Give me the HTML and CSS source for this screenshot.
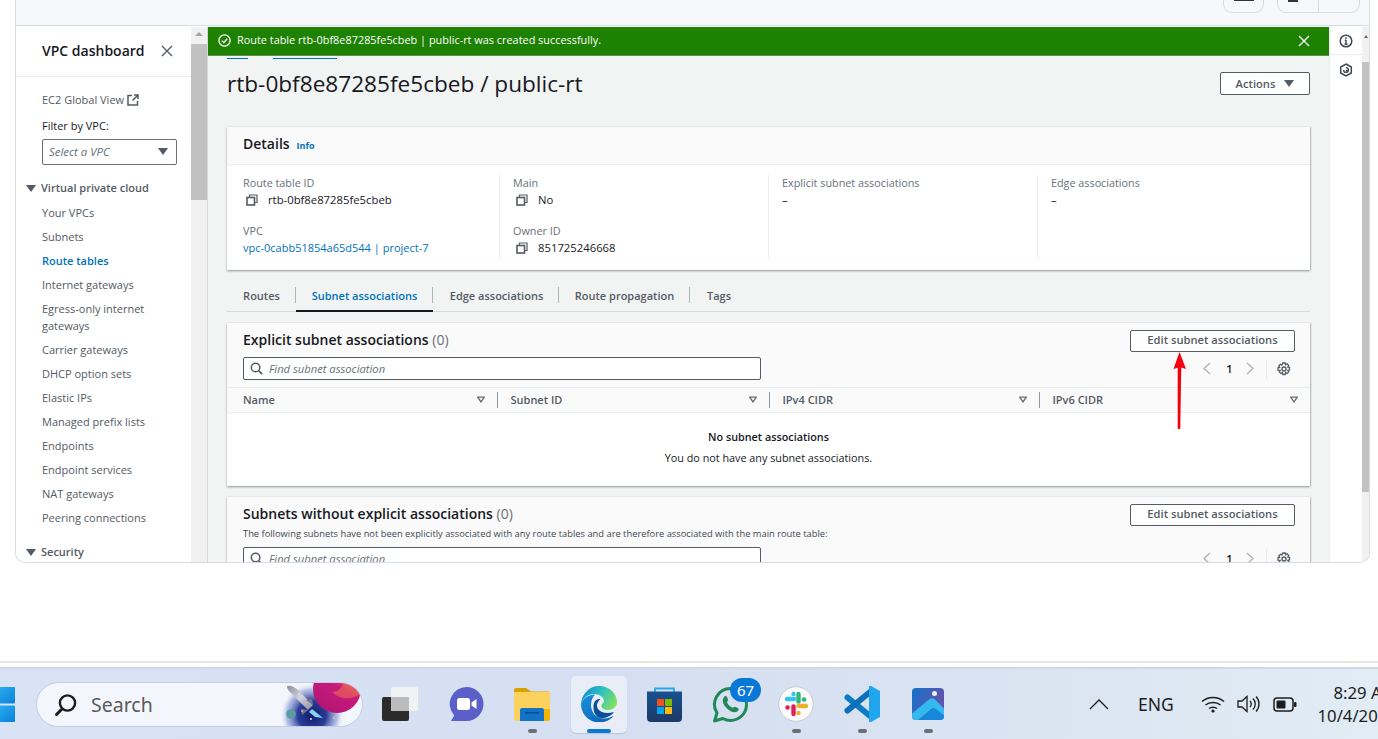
FILE: index.html
```html
<!DOCTYPE html>
<html lang="en">
<head>
  <meta charset="UTF-8">
  <title>Route table details</title>
  <link rel="stylesheet" href="styles.css">
</head>
<body>
  <svg class="defs" width="0" height="0">
    <symbol id="copy" viewBox="0 0 12 12"><path d="M3.5 3.5V1h7.5v7.5H8.5" fill="none" stroke="#545b64" stroke-width="1.2"/><rect x="1" y="3.5" width="7.5" height="7.5" fill="none" stroke="#545b64" stroke-width="1.6"/></symbol>
    <symbol id="sort" viewBox="0 0 10 8"><path d="M1 1h8L5 7z" fill="none" stroke="#687078" stroke-width="1.7"/></symbol>
    <symbol id="search" viewBox="0 0 14 14"><circle cx="6" cy="6" r="4.6" fill="none" stroke="#545b64" stroke-width="1.6"/><path d="M9.5 9.5L13 13" stroke="#545b64" stroke-width="1.8"/></symbol>
    <symbol id="gear" viewBox="0 0 14 14"><circle cx="7" cy="7" r="2" fill="none" stroke="#545b64" stroke-width="1.4"/><path d="M5.8 1h2.4l.4 1.7 1.5-.8 1.6 1.6-.9 1.5 1.7.5v2.4l-1.7.5.9 1.5-1.6 1.6-1.5-.9-.4 1.9H5.8l-.4-1.9-1.5.9-1.6-1.6.9-1.5L1 8.2V5.8l1.7-.5-.9-1.5 1.6-1.6 1.5.8z" fill="none" stroke="#545b64" stroke-width="1.3"/></symbol>
  </svg>

  <div class="window">
    <!-- Console header, mostly cut off -->
    <div class="topbar">
      <div class="top-btn top-btn-one"><span class="top-mark"></span></div>
      <div class="top-btn top-btn-two"><span class="top-flag"></span></div>
    </div>

    <div class="console">
      <aside class="sidebar">
        <div class="side-head">
          <span>VPC dashboard</span>
          <svg width="12" height="12" viewBox="0 0 12 12"><path d="M1 1l10 10M11 1L1 11" stroke="#545b64" stroke-width="1.4"/></svg>
        </div>
        <div class="side-link">EC2 Global View
          <svg width="12" height="12" viewBox="0 0 12 12"><path d="M5 1.5H1v9.5h9.5V7M7 1h4v4M11 1L5.5 6.5" fill="none" stroke="#545b64" stroke-width="1.5"/></svg>
        </div>
        <div class="side-label">Filter by VPC:</div>
        <div class="side-select"><i>Select a VPC</i><span class="caret"></span></div>
        <div class="side-group"><span class="caret"></span>Virtual private cloud</div>
        <ul class="side-list">
          <li>Your VPCs</li>
          <li>Subnets</li>
          <li class="current">Route tables</li>
          <li>Internet gateways</li>
          <li class="two-line">Egress-only internet gateways</li>
          <li>Carrier gateways</li>
          <li>DHCP option sets</li>
          <li>Elastic IPs</li>
          <li>Managed prefix lists</li>
          <li>Endpoints</li>
          <li>Endpoint services</li>
          <li>NAT gateways</li>
          <li>Peering connections</li>
        </ul>
        <div class="side-group side-security"><span class="caret"></span>Security</div>
      </aside>
      <div class="scroll scroll-left"><span class="scroll-up"></span><span class="thumb thumb-left"></span></div>

      <main class="main">
        <div class="flash">
          <svg width="13" height="13" viewBox="0 0 13 13"><circle cx="6.5" cy="6.5" r="5.6" fill="none" stroke="#fff" stroke-width="1.3"/><path d="M3.8 6.6l2 2 3.4-3.8" fill="none" stroke="#fff" stroke-width="1.3"/></svg>
          <span class="flash-text">Route table rtb-0bf8e87285fe5cbeb | public-rt was created successfully.</span>
          <svg class="flash-close" width="12" height="12" viewBox="0 0 12 12"><path d="M1 1l10 10M11 1L1 11" stroke="#fff" stroke-width="1.3"/></svg>
        </div>
        <div class="crumbs"><span class="crumb-a"></span><span class="crumb-b"></span></div>

        <div class="page-head">
          <h1>rtb-0bf8e87285fe5cbeb / public-rt</h1>
          <div class="btn btn-actions">Actions<span class="caret"></span></div>
        </div>

        <section class="card details">
          <div class="card-head details-head"><h2>Details</h2><a class="info">Info</a></div>
          <div class="details-grid">
            <div class="col">
              <div class="label">Route table ID</div>
              <div class="value"><svg width="12" height="12"><use href="#copy"/></svg>rtb-0bf8e87285fe5cbeb</div>
              <div class="label label-two">VPC</div>
              <div class="value"><a class="link">vpc-0cabb51854a65d544 | project-7</a></div>
            </div>
            <div class="col">
              <div class="label">Main</div>
              <div class="value"><svg width="12" height="12"><use href="#copy"/></svg>No</div>
              <div class="label label-two">Owner ID</div>
              <div class="value"><svg width="12" height="12"><use href="#copy"/></svg>851725246668</div>
            </div>
            <div class="col">
              <div class="label">Explicit subnet associations</div>
              <div class="value">–</div>
            </div>
            <div class="col">
              <div class="label">Edge associations</div>
              <div class="value">–</div>
            </div>
          </div>
        </section>

        <nav class="tabs">
          <span class="tab tab-routes">Routes</span>
          <span class="tab tab-active">Subnet associations</span>
          <span class="tab tab-edge">Edge associations</span>
          <span class="tab tab-prop">Route propagation</span>
          <span class="tab tab-tags">Tags</span>
        </nav>

        <section class="card assoc">
          <div class="assoc-top">
            <h2>Explicit subnet associations <em>(0)</em></h2>
            <div class="btn btn-edit">Edit subnet associations</div>
          </div>
          <div class="filter-row">
            <div class="filter"><svg width="13" height="13"><use href="#search"/></svg><i>Find subnet association</i></div>
            <div class="pager">
              <svg width="9" height="13" viewBox="0 0 9 13"><path d="M8 1L2 6.5 8 12" fill="none" stroke="#aab7b8" stroke-width="1.4"/></svg>
              <b>1</b>
              <svg width="9" height="13" viewBox="0 0 9 13"><path d="M1 1l6 5.5L1 12" fill="none" stroke="#aab7b8" stroke-width="1.4"/></svg>
              <span class="pager-sep"></span>
              <svg width="14" height="14"><use href="#gear"/></svg>
            </div>
          </div>
          <div class="thead">
            <div class="th">Name<svg width="8" height="7"><use href="#sort"/></svg></div>
            <div class="th">Subnet ID<svg width="8" height="7"><use href="#sort"/></svg></div>
            <div class="th">IPv4 CIDR<svg width="8" height="7"><use href="#sort"/></svg></div>
            <div class="th">IPv6 CIDR<svg width="8" height="7"><use href="#sort"/></svg></div>
          </div>
          <div class="empty">
            <b>No subnet associations</b>
            <span>You do not have any subnet associations.</span>
          </div>
          <svg class="arrow" width="16" height="78" viewBox="0 0 16 78"><path d="M7.5 0L14 17 9.3 15.5 8 75.5 6 75.5 6.5 15.5 1.5 17z" fill="#f5000f"/><path d="M7 15L7 76" stroke="#f5000f" stroke-width="2.6" stroke-linecap="round"/></svg>
        </section>

        <section class="card assoc assoc-two">
          <div class="assoc-top">
            <div>
              <h2>Subnets without explicit associations <em>(0)</em></h2>
              <p class="sub">The following subnets have not been explicitly associated with any route tables and are therefore associated with the main route table:</p>
            </div>
            <div class="btn btn-edit">Edit subnet associations</div>
          </div>
          <div class="filter-row">
            <div class="filter"><svg width="13" height="13"><use href="#search"/></svg><i>Find subnet association</i></div>
            <div class="pager">
              <svg width="9" height="13" viewBox="0 0 9 13"><path d="M8 1L2 6.5 8 12" fill="none" stroke="#aab7b8" stroke-width="1.4"/></svg>
              <b>1</b>
              <svg width="9" height="13" viewBox="0 0 9 13"><path d="M1 1l6 5.5L1 12" fill="none" stroke="#aab7b8" stroke-width="1.4"/></svg>
              <span class="pager-sep"></span>
              <svg width="14" height="14"><use href="#gear"/></svg>
            </div>
          </div>
        </section>
      </main>

      <div class="rail">
        <div class="rail-cell rail-first">
          <svg width="14" height="14" viewBox="0 0 14 14"><circle cx="7" cy="7" r="5.8" fill="none" stroke="#414750" stroke-width="1.5"/><path d="M7 6v4.2M5.6 10.2h2.8M5.8 6.2H7" stroke="#414750" stroke-width="1.4"/><rect x="6.2" y="3.4" width="1.6" height="1.5" fill="#414750"/></svg>
        </div>
        <div class="rail-cell">
          <svg width="14" height="14" viewBox="0 0 14 14"><path d="M7 1l5.3 3v6L7 13l-5.3-3V4z" fill="none" stroke="#414750" stroke-width="1.5"/><path d="M4.6 7a2.4 2.4 0 1 0 2.4-2.4M7 7l2.2 2.2" fill="none" stroke="#414750" stroke-width="1.4"/></svg>
        </div>
      </div>
      <div class="scroll scroll-right"><span class="scroll-up scroll-up-small"></span><span class="thumb thumb-right"></span></div>
    </div>
  </div>

  <div class="rule"></div>

  <footer class="taskbar">
    <div class="start">
      <svg width="15" height="35" viewBox="0 0 15 35"><defs><linearGradient id="winA" x1="0" y1="0" x2="1" y2="1"><stop offset="0" stop-color="#2db4f3"/><stop offset="1" stop-color="#0a7fd8"/></linearGradient></defs><rect x="-5" y="0" width="20" height="16.6" rx="1" fill="url(#winA)"/><rect x="-5" y="18.4" width="20" height="16.6" rx="1" fill="url(#winA)"/></svg>
    </div>

    <div class="searchbox">
      <svg width="24" height="24" viewBox="0 0 24 24"><circle cx="13.5" cy="10" r="7.6" fill="none" stroke="#1c1c1c" stroke-width="2.4"/><path d="M8 16L2.5 21.5" stroke="#1c1c1c" stroke-width="3" stroke-linecap="round"/></svg>
      <span>Search</span>
      <svg class="search-art" width="82" height="45" viewBox="0 0 82 45">
        <defs>
          <radialGradient id="space" gradientUnits="userSpaceOnUse" cx="32" cy="33" r="32"><stop offset="0" stop-color="#101a6e"/><stop offset="0.45" stop-color="#2a3c96"/><stop offset="0.8" stop-color="#8f9fd6" stop-opacity="0.6"/><stop offset="1" stop-color="#eef2fc" stop-opacity="0"/></radialGradient>
          <linearGradient id="planet" x1="0.9" y1="0" x2="0.25" y2="1"><stop offset="0" stop-color="#f08a4f"/><stop offset="0.5" stop-color="#c8197c"/><stop offset="1" stop-color="#b01672"/></linearGradient>
          <linearGradient id="rocket" x1="0" y1="0" x2="1" y2="1"><stop offset="0" stop-color="#8f8f9e"/><stop offset="0.5" stop-color="#d4d4de"/><stop offset="1" stop-color="#8a8a9d"/></linearGradient>
        </defs>
        <rect x="0" y="0" width="82" height="45" fill="url(#space)"/>
        <circle cx="57" cy="7" r="24" fill="url(#planet)"/>
        <path d="M64 -10a24 24 0 0 1 16 22c-8 6-20 6-28-2 8 0 14-8 12-20z" fill="#f0744f" fill-opacity="0.55"/>
        <circle cx="11" cy="32" r="4.800" fill="#5f9aa5"/>
        <path d="M7 4c4-1 8 1 12 5l14 14-5 5-14-14C10 10 7 8 7 4z" fill="url(#rocket)"/>
        <path d="M26 18l6-1 1 6zM21 27l1 6 6-5z" fill="#75758c"/>
        <path d="M32 27l11 9-8-1-6-5z" fill="#86d0f2"/>
        <circle cx="19" cy="12" r="0.800" fill="#fbeeb3"/><circle cx="22" cy="29" r="0.800" fill="#fbeeb3"/><circle cx="31" cy="37" r="0.900" fill="#fbeeb3"/><circle cx="54" cy="36" r="0.800" fill="#fbeeb3"/><circle cx="64" cy="36" r="0.900" fill="#fbeeb3"/>
      </svg>
    </div>

    <div class="apps">
      <div class="app">
        <svg width="36" height="34" viewBox="0 0 36 34"><rect x="0" y="10" width="27" height="24" rx="2" fill="#2b2b2b"/><rect x="9" y="0" width="27" height="24" rx="1.5" fill="#f5f5f3" fill-opacity="0.86"/><rect x="9" y="10" width="18" height="14" fill="#b9b9b9" fill-opacity="0.9"/></svg>
      </div>
      <div class="app">
        <svg width="35" height="35" viewBox="0 0 35 35"><path d="M17.5 0a17 17 0 0 1 0 34H2l3.2-5.5A17 17 0 0 1 17.5 0z" fill="#5b5fc7"/><rect x="8" y="11" width="13" height="12" rx="2.5" fill="#fff"/><path d="M22.5 15.5l5-3.5v10l-5-3.5z" fill="#fff"/></svg>
      </div>
      <div class="app">
        <svg width="36" height="33" viewBox="0 0 36 33"><path d="M0 2a2 2 0 0 1 2-2h10l5 3.5h17a2 2 0 0 1 2 2V8H0z" fill="#d9a200"/><path d="M0 4h36v27a2 2 0 0 1-2 2H2a2 2 0 0 1-2-2z" fill="#fcd25c"/><path d="M28 21h8v10a2 2 0 0 1-2 2h-6z" fill="#f3b500"/><path d="M6 22a2 2 0 0 1 2-2h20a2 2 0 0 1 2 2v11H6z" fill="#1073c6"/><rect x="11" y="24" width="14" height="1.6" fill="#0c4f94"/></svg>
        <span class="dot"></span>
      </div>
      <div class="app app-active">
        <svg width="36" height="36" viewBox="0 0 36 36">
          <defs>
            <linearGradient id="edgeA" x1="0" y1="0.3" x2="1" y2="0.7"><stop offset="0" stop-color="#0f8fd4"/><stop offset="0.5" stop-color="#31c4bc"/><stop offset="1" stop-color="#86e25a"/></linearGradient>
            <linearGradient id="edgeB" x1="0" y1="0" x2="0.8" y2="1"><stop offset="0" stop-color="#1a93df"/><stop offset="1" stop-color="#0d62b4"/></linearGradient>
          </defs>
          <path d="M0 18C1 7 9 0 18 0c11 0 18 8 18 16 0 5.500-5 8-9 8-4 0-7-2-6.500-4.500.5-2.500 2.500-2.500 2.500-4.500 0-4-5-7-10-7-6 0-11 4-13 10.500z" fill="url(#edgeA)"/>
          <path d="M0 18c2-6 8-9.500 14-9.500-2.500 2.500-4 6.500-4 10.500 0 8 6 14 14 13.500 3 0 6-1 9-3-3 4-8.500 7-15 7C8 36.500 0 28 0 18z" fill="url(#edgeB)"/>
          <path d="M13 17c1-3 4-4.500 6.500-4-3.500 3-4.500 7-2.500 10 3 4 9 5 16 3-3 4-8 6-12 6-7 0-10-8-8-15z" fill="#0a4f98"/>
        </svg>
        <span class="dot dot-active"></span>
      </div>
      <div class="app">
        <svg width="35" height="35" viewBox="0 0 35 35"><defs><linearGradient id="bag" x1="0" y1="0" x2="0" y2="1"><stop offset="0" stop-color="#17528f"/><stop offset="1" stop-color="#1d3968"/></linearGradient></defs><path d="M8 6V1.500h19V6" fill="none" stroke="#2aa6e8" stroke-width="1.800"/><path d="M0 4.500h35V31a4 4 0 0 1-4 4H4a4 4 0 0 1-4-4z" fill="url(#bag)"/><rect x="10" y="12" width="7" height="7" fill="#f25022"/><rect x="18" y="12" width="7" height="7" fill="#7fba00"/><rect x="10" y="20" width="7" height="7" fill="#00a4ef"/><rect x="18" y="20" width="7" height="7" fill="#ffb900"/></svg>
      </div>
      <div class="app app-wa">
        <svg width="37" height="37" viewBox="0 0 37 37"><path d="M18.500 2.500a16 16 0 0 1 0 32 16 16 0 0 1-7.700-2L2.500 35l2.500-8a16 16 0 0 1 13.500-24.500z" fill="none" stroke="#1f8a57" stroke-width="3" stroke-linejoin="round"/><path d="M12 11c1-1.500 2.500-1.500 3 0l1 2.500c.3 1-1 2-1 2.800 1 2.500 3 4.500 5.500 5.500 1 0 1.800-1.300 2.800-1l2.500 1.200c1.500.8 1 2.200 0 3-3 2.500-7 1-10.800-2.500C11 18.500 9.500 14 12 11z" fill="#1f8a57"/></svg>
        <span class="badge">67</span>
      </div>
      <div class="app">
        <svg width="36" height="36" viewBox="0 0 36 36"><circle cx="18" cy="18" r="17.300" fill="#fbfbfb" stroke="#c9c9cf" stroke-width="1"/><g stroke-width="4.400" stroke-linecap="round" fill="none"><path d="M16 13H9" stroke="#36c5f0"/><path d="M15.500 8V8.100" stroke="#36c5f0"/><path d="M20.500 15.500V8" stroke="#2eb67d"/><path d="M26 13.500H26.100" stroke="#2eb67d"/><path d="M20.500 20H28" stroke="#ecb22e"/><path d="M20.500 27V27.100" stroke="#ecb22e"/><path d="M15.500 20.500V28" stroke="#e01e5a"/><path d="M9.500 21.500H9.600" stroke="#e01e5a"/></g></svg>
        <span class="dot"></span>
      </div>
      <div class="app">
        <svg width="36" height="36" viewBox="0 0 36 36"><path d="M3.500 11.500L26 30" stroke="#0a7cc4" stroke-width="6" stroke-linecap="round"/><path d="M3.500 24.500L26 6" stroke="#0c6fb8" stroke-width="6" stroke-linecap="round"/><path d="M25 0l2 0 9 5v26l-9 5h-2z" fill="#1fa6ee"/></svg>
        <span class="dot"></span>
      </div>
      <div class="app">
        <svg width="32" height="32" viewBox="0 0 32 32"><defs><linearGradient id="ph" x1="0" y1="0.3" x2="1" y2="0.7"><stop offset="0" stop-color="#1a6fc9"/><stop offset="1" stop-color="#6d4fa8"/></linearGradient></defs><rect width="32" height="32" rx="4" fill="url(#ph)"/><circle cx="22.500" cy="5.500" r="2.500" fill="#f1f1f6"/><path d="M0 25.500L17 11.500q3-2.500 6 0l9 9V28a4 4 0 0 1-4 4H4a4 4 0 0 1-4-4z" fill="#35b8ee"/><path d="M6 32l13-11q2.500-2 5 0l8 6.500V28a4 4 0 0 1-4 4z" fill="#1687da"/></svg>
        <span class="dot"></span>
      </div>
    </div>

    <div class="tray">
      <svg class="tray-chevron" width="20" height="11" viewBox="0 0 20 11"><path d="M1 10l9-9 9 9" fill="none" stroke="#1c1c1c" stroke-width="1.300"/></svg>
      <span class="lang">ENG</span>
      <svg class="tray-wifi" width="24" height="18" viewBox="0 0 24 18"><g fill="none" stroke="#1c1c1c" stroke-width="1.500"><path d="M1 6.500c6-5.500 16-5.500 22 0"/><path d="M4.500 10c4-3.500 11-3.500 15 0"/><path d="M8 13.500c2.200-1.800 5.800-1.800 8 0"/></g><circle cx="12" cy="16" r="1.600" fill="#1c1c1c"/></svg>
      <svg class="tray-vol" width="24" height="18" viewBox="0 0 24 18"><g fill="none" stroke="#1c1c1c" stroke-width="1.300"><path d="M1 6h4l5-4.500v15L5 12H1z"/><path d="M13 6c1.500 1.800 1.500 4.200 0 6"/><path d="M16 3.500c3 3 3 8 0 11"/><path d="M19 1.500c4 4 4 11 0 15"/></g></svg>
      <svg class="tray-batt" width="24" height="15" viewBox="0 0 24 15"><rect x="1" y="1" width="19" height="13" rx="3" fill="none" stroke="#1c1c1c" stroke-width="1.500"/><rect x="3.500" y="3.500" width="9" height="8" rx="1" fill="#1c1c1c"/><rect x="21" y="5" width="2.500" height="5" rx="1" fill="#1c1c1c"/></svg>
      <div class="clock"><span>8:29 AM</span><span>10/4/2023</span></div>
    </div>
  </footer>
</body>
</html>
```

FILE: styles.css
```css
* {
  box-sizing: border-box;
}
html, body {
  height: 739px;
  overflow: hidden;
}
body {
  margin: 0;
  background-color: #fff;
  font-family: "Open Sans", "Noto Sans", sans-serif;
  font-size: 11px;
  color: #545b64;
}
.defs {
  position: absolute;
}
h1, h2, p, ul {
  margin: 0;
  padding: 0;
}
svg {
  flex-shrink: 0;
}

/* Window */
.window {
  margin-left: 15px;
  width: 1355px;
  height: 563px;
  border: 1px solid #d5dce6;
  border-top: none;
  border-radius: 0 0 10px 10px;
  overflow: hidden;
}
.topbar {
  height: 26px;
  background-color: #f7f8fa;
  border-bottom: 1px solid #d5dce6;
  display: flex;
  padding-left: 1207px;
  gap: 13px;
}
.top-btn {
  height: 13px;
  border: 1px solid #d5dce6;
  border-top: none;
  border-radius: 0 0 9px 9px;
}
.top-btn-one {
  width: 41px;
  padding-left: 10px;
}
.top-mark {
  display: block;
  width: 20px;
  height: 1px;
  background-color: #333;
}
.top-btn-two {
  width: 83px;
  padding-left: 10px;
  background: linear-gradient(to right, transparent 40px, #d5dce6 40px, #d5dce6 41px, transparent 41px);
}
.top-flag {
  display: block;
  width: 10px;
  height: 2px;
  background-color: #333;
}
.console {
  margin-top: 1px;
  display: flex;
  height: 536px;
}

/* Sidebar */
.sidebar {
  width: 175px;
  flex-shrink: 0;
  background-color: #fff;
  overflow: hidden;
}
.side-head {
  height: 50px;
  padding: 0 18px 2px 26px;
  display: flex;
  align-items: center;
  justify-content: space-between;
  border-bottom: 1px solid #eaeded;
  font-size: 14px;
  font-weight: 600;
  color: #16191f;
}
.side-link {
  margin: 15px 0 0 26px;
  height: 16px;
  line-height: 16px;
  display: flex;
  align-items: center;
  gap: 3px;
}
.side-label {
  margin: 10px 0 0 26px;
  line-height: 16px;
  color: #16191f;
}
.side-select {
  margin: 5px 0 0 26px;
  width: 135px;
  height: 26px;
  border: 1px solid #687078;
  border-radius: 2px;
  padding: 0 8px 2px 6px;
  display: flex;
  align-items: center;
  justify-content: space-between;
  font-size: 11.4px;
  color: #687078;
}
.caret {
  display: inline-block;
  width: 0;
  height: 0;
  border-left: 5px solid transparent;
  border-right: 5px solid transparent;
  border-top: 7px solid #545b64;
}
.side-group {
  margin: 15px 0 0 10px;
  line-height: 16px;
  font-weight: 600;
  display: flex;
  align-items: center;
  gap: 5px;
}
.side-list {
  list-style: none;
  margin: 5px 0 0 26px;
  width: 120px;
}
.side-list li {
  padding: 4px 0;
  line-height: 16px;
}
.side-list li.current {
  color: #0073bb;
  font-weight: 600;
}
.side-list li.two-line {
  padding-top: 3px;
  line-height: 17px;
}
.side-security {
  margin-top: 14px;
}

/* Scrollbars */
.scroll {
  flex-shrink: 0;
  background-color: #f1f1f1;
}
.scroll-left {
  width: 17px;
  border-right: 1px solid #d5dbdb;
}
.scroll-up {
  display: block;
  width: 0;
  margin: 5px auto 0;
  border-left: 4px solid transparent;
  border-right: 4px solid transparent;
  border-bottom: 4px solid #a3a3a3;
}
.scroll-up-small {
  margin-top: 0;
  border-left-width: 2px;
  border-right-width: 2px;
  border-bottom-width: 3px;
  border-bottom-color: #666;
}
.thumb {
  display: block;
  background-color: #c1c1c1;
}
.thumb-left {
  margin-top: 8px;
  height: 156px;
}
.scroll-right {
  width: 7px;
  padding-top: 8px;
}
.thumb-right {
  margin-top: 24px;
  height: 430px;
}

/* Main column */
.main {
  width: 1121px;
  flex-shrink: 0;
  background-color: #f2f3f3;
  overflow: hidden;
}
.flash {
  height: 29px;
  background-color: #1d8102;
  border-bottom: 1px solid #5d8f50;
  color: #fff;
  font-size: 10.9px;
  font-weight: 500;
  padding: 0 19px 1px 10px;
  display: flex;
  align-items: center;
  gap: 6px;
}
.flash-text {
  flex: 1;
  margin-top: -2px;
}
.crumbs {
  height: 3px;
  display: flex;
  padding-left: 19px;
  gap: 25px;
}
.crumb-a, .crumb-b {
  height: 1px;
  margin-top: 2px;
  background-color: #0073bb;
}
.crumb-a {
  width: 21px;
}
.crumb-b {
  width: 64px;
}
.page-head {
  height: 68px;
  padding: 9px 19px 0;
  display: flex;
  justify-content: space-between;
  align-items: flex-start;
}
h1 {
  margin-top: 1px;
  font-size: 22.6px;
  font-weight: 400;
  line-height: 30px;
  color: #16191f;
}
.btn {
  background-color: #fff;
  border: 1px solid #545b64;
  border-radius: 2px;
  font-size: 11.2px;
  font-weight: 600;
  color: #545b64;
  display: flex;
  align-items: center;
  justify-content: center;
}
.btn-actions {
  width: 90px;
  height: 23px;
  margin-top: 4px;
  gap: 9px;
}
.card {
  margin: 0 19px;
  width: 1083px;
  background-color: #fff;
  box-shadow: 0 1px 2px rgba(0, 28, 36, 0.4), 1px 0 1px rgba(0, 28, 36, 0.12);
}
h2 {
  font-size: 14px;
  font-weight: 600;
  line-height: 20px;
  color: #16191f;
}
h2 em {
  font-style: normal;
  font-weight: 400;
  color: #687078;
}

/* Details card */
.details {
  height: 143px;
}
.details-head {
  height: 38px;
  background-color: #fafafa;
  border-bottom: 1px solid #eaeded;
  padding: 0 16px 3px;
  display: flex;
  align-items: center;
  gap: 7px;
}
.info {
  font-size: 9px;
  font-weight: 700;
  color: #0073bb;
  margin-top: 2px;
}
.details-grid {
  display: grid;
  grid-template-columns: 272px 269px 269px 273px;
  padding-top: 10px;
}
.col {
  height: 83px;
  padding-left: 13px;
  border-left: 1px solid #eaeded;
}
.col:first-child {
  padding-left: 16px;
  border-left: none;
}
.label {
  line-height: 16px;
  font-size: 10.8px;
  color: #687078;
}
.label-two {
  margin-top: 15px;
}
.value {
  margin-top: 1px;
  line-height: 16px;
  font-size: 11.3px;
  color: #16191f;
  display: flex;
  align-items: center;
  gap: 10px;
}
.value svg {
  margin-left: 3px;
}
.link {
  font-size: 11px;
  color: #0073bb;
}

/* Tabs */
.tabs {
  margin: 9px 19px 0;
  height: 33px;
  border-bottom: 1px solid #d5dbdb;
  display: flex;
  font-weight: 600;
  align-items: stretch;
}
.tab {
  padding-top: 9px;
  text-align: center;
  position: relative;
}
.tab-routes {
  width: 69px;
}
.tab-active {
  width: 137px;
  color: #0073bb;
  height: 33px;
  border-bottom: 2px solid #16191f;
}
.tab-edge {
  width: 126px;
  padding-left: 1px;
}
.tab-prop {
  width: 131px;
}
.tab-tags {
  width: 58px;
}
.tab-routes::after, .tab-edge::after, .tab-prop::after, .tab-active::after {
  content: "";
  position: absolute;
  right: 0;
  top: 8px;
  height: 16px;
  width: 1px;
  background-color: #aab7b8;
}

/* Association tables */
.assoc {
  margin-top: 11px;
  height: 163px;
  position: relative;
  background: linear-gradient(#fafafa 64px, #fff 64px);
}
.assoc-top {
  height: 34px;
  padding: 7px 15px 0 16px;
  display: flex;
  justify-content: space-between;
  align-items: flex-start;
}
.btn-edit {
  width: 165px;
  height: 22px;
  padding-bottom: 3px;
}
.filter-row {
  height: 30px;
  padding: 0 16px;
  display: flex;
  justify-content: space-between;
  align-items: flex-start;
}
.filter {
  width: 518px;
  height: 23px;
  background-color: #fff;
  border: 1px solid #545b64;
  border-radius: 2px;
  padding: 0 6px 1px;
  display: flex;
  align-items: center;
  gap: 6px;
  font-size: 11.2px;
  color: #687078;
}
.pager {
  display: flex;
  align-items: center;
  height: 23px;
  color: #16191f;
  margin-right: 3px;
}
.pager b {
  width: 35px;
  padding-left: 2px;
  text-align: center;
  font-weight: 600;
}
.pager-sep {
  width: 1px;
  height: 20px;
  background-color: #eaeded;
  margin: 0 10px 0 11px;
}
.thead {
  height: 26px;
  display: grid;
  grid-template-columns: 271px 272px 270px 270px;
  background-color: #fafafa;
  border-top: 1px solid #eaeded;
  border-bottom: 1px solid #eaeded;
}
.th {
  padding: 0 13px 2px 12.5px;
  display: flex;
  align-items: center;
  justify-content: space-between;
  font-weight: 600;
  color: #545b64;
  background: linear-gradient(#8d969e, #8d969e) right 4px / 1px 16px no-repeat;
}
.th:first-child {
  padding-left: 16px;
}
.th:last-child {
  padding-right: 12px;
  background: none;
}
.empty {
  padding-top: 16px;
  text-align: center;
  display: flex;
  flex-direction: column;
  gap: 6px;
  line-height: 15px;
  color: #16191f;
  font-size: 10.8px;
}
.empty b {
  font-weight: 600;
}
.arrow {
  position: absolute;
  left: 945px;
  top: 29px;
}
.assoc-two {
  height: 80px;
  background: #fafafa;
}
.assoc-two .assoc-top {
  height: 50px;
  padding-top: 7px;
}
.sub {
  font-size: 9.34px;
  line-height: 14px;
  margin-top: 3px;
  color: #414750;
}

/* Right rail */
.rail {
  width: 33px;
  flex-shrink: 0;
  background-color: #fff;
  border-left: 1px solid #eaeded;
}
.rail-cell {
  height: 29px;
  display: flex;
  align-items: center;
  justify-content: center;
}
.rail-first {
  height: 28px;
  border-bottom: 1px solid #eaeded;
}

/* Taskbar */
.rule {
  height: 2px;
  margin-top: 98px;
  background-color: #e6e6e6;
}
.taskbar {
  margin-top: 4px;
  height: 72px;
  border-top: 2px solid #d0d8e6;
  background: linear-gradient(to right, #d8e3f6 0%, #d5dff1 45%, #d9e3f1 70%, #e2ecf5 100%);
  display: flex;
  align-items: flex-start;
}
.start {
  width: 15px;
  margin-top: 18px;
  flex-shrink: 0;
}
.start svg {
  display: block;
}
.searchbox {
  margin: 13px 0 0 21px;
  width: 327px;
  height: 45px;
  flex-shrink: 0;
  border: 1px solid #c3cde0;
  border-radius: 23px;
  background-color: #f3f6fd;
  overflow: hidden;
  padding-left: 17px;
  display: flex;
  align-items: center;
  font-family: "Noto Sans", sans-serif;
  font-size: 19.5px;
  color: #5a5a5a;
}
.searchbox span {
  margin-left: 13px;
}
.search-art {
  margin-left: auto;
}
.apps {
  margin-left: 4px;
  display: flex;
  flex-shrink: 0;
}
.app {
  width: 66px;
  height: 64px;
  flex-shrink: 0;
  display: flex;
  flex-direction: column;
  align-items: center;
  justify-content: center;
  position: relative;
}
.app > svg {
  margin-top: 6px;
}
.app-active {
  background-color: #e8edf7;
  border-radius: 5px;
  box-shadow: 0 1px 1px rgba(0, 0, 0, 0.12);
  width: 56px;
  margin: 7px 4px 0 6px;
  height: 57px;
  padding-bottom: 8px;
}
.dot {
  position: absolute;
  left: 29px;
  bottom: 0;
  width: 9px;
  height: 4px;
  border-radius: 2px;
  background-color: #6d6f75;
}
.dot-active {
  left: 16px;
  width: 24px;
  background-color: #0a78d7;
}
.badge {
  position: absolute;
  left: 33px;
  top: 9px;
  width: 31px;
  height: 24px;
  border-radius: 12px;
  background-color: #0a78d7;
  color: #fff;
  font-family: "Noto Sans", sans-serif;
  font-size: 15px;
  line-height: 24px;
  text-align: center;
}
.tray {
  display: flex;
  align-items: center;
  height: 70px;
  flex-shrink: 0;
  color: #1c1c1c;
  font-family: "Noto Sans", sans-serif;
}
.tray-chevron {
  margin-left: 128px;
}
.lang {
  margin-left: 29px;
  font-size: 17.5px;
}
.tray-wifi {
  margin-left: 27px;
}
.tray-vol {
  margin-left: 12px;
}
.tray-batt {
  margin-left: 12px;
}
.clock {
  margin-left: 20px;
  display: flex;
  flex-direction: column;
  align-items: flex-end;
  font-size: 16.7px;
  line-height: 23px;
  white-space: nowrap;
  width: 80px;
}
```
